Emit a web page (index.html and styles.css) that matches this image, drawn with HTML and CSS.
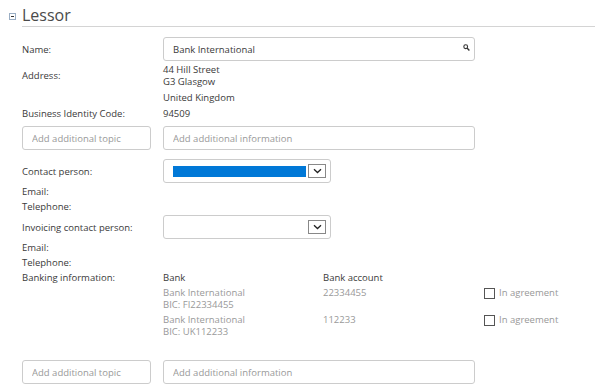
FILE: index.html
```html
<!DOCTYPE html>
<html lang="en">
<head>
    <meta charset="UTF-8">
    <title>Lessor</title>
    <link rel="stylesheet" href="styles.css">
</head>
<body>
    <div class="section">
        <div class="section-head">
            <svg class="toggle" width="7" height="7" viewBox="0 0 7 7">
                <rect x="0.5" y="0.5" width="6" height="6" fill="#fff" stroke="#9aaec4"/>
                <line x1="2" y1="3.5" x2="5" y2="3.5" stroke="#333"/>
            </svg>
            <h2>Lessor</h2>
        </div>

        <div class="row row-input">
            <label class="label" for="lessorName">Name:</label>
            <div class="search-field">
                <input type="text" id="lessorName" class="field wide" value="Bank International">
                <svg class="search-icon" width="7" height="7" viewBox="0 0 7 7">
                    <circle cx="2.7" cy="2.7" r="1.9" fill="none" stroke="#333" stroke-width="1.1"/>
                    <line x1="4" y1="4" x2="6.4" y2="6.4" stroke="#333" stroke-width="1.4"/>
                </svg>
            </div>
        </div>

        <div class="row address">
            <div class="label">Address:</div>
            <div class="value">44 Hill Street<br>G3 Glasgow</div>
        </div>
        <div class="row line16 country">
            <div class="label"></div>
            <div class="value">United Kingdom</div>
        </div>
        <div class="row line16">
            <div class="label">Business Identity Code:</div>
            <div class="value">94509</div>
        </div>

        <div class="row row-input extra">
            <input type="text" class="field topic" placeholder="Add additional topic">
            <input type="text" class="field wide" placeholder="Add additional information">
        </div>

        <div class="row row-input contact">
            <div class="label">Contact person:</div>
            <div class="select">
                <span class="selected"></span>
                <span class="arrow">
                    <svg width="9" height="6" viewBox="0 0 9 6"><path d="M1 1.2 L4.5 4.5 L8 1.2" fill="none" stroke="#222" stroke-width="1.3"/></svg>
                </span>
            </div>
        </div>
        <div class="row line15 first"><div class="label">Email:</div></div>
        <div class="row line15"><div class="label">Telephone:</div></div>

        <div class="row row-input invoicing">
            <div class="label">Invoicing contact person:</div>
            <div class="select">
                <span class="empty"></span>
                <span class="arrow">
                    <svg width="9" height="6" viewBox="0 0 9 6"><path d="M1 1.2 L4.5 4.5 L8 1.2" fill="none" stroke="#222" stroke-width="1.3"/></svg>
                </span>
            </div>
        </div>
        <div class="row line15 first"><div class="label">Email:</div></div>
        <div class="row line15"><div class="label">Telephone:</div></div>

        <div class="row line15">
            <div class="label">Banking information:</div>
            <div class="bank-col">Bank</div>
            <div class="acc-col">Bank account</div>
        </div>

        <div class="bank-list">
            <div class="bank-row">
                <div class="bank-col">Bank International<br>BIC: FI22334455</div>
                <div class="acc-col">22334455</div>
                <label class="agree"><span class="check"></span>In agreement</label>
            </div>
            <div class="bank-row">
                <div class="bank-col">Bank International<br>BIC: UK112233</div>
                <div class="acc-col">112233</div>
                <label class="agree"><span class="check"></span>In agreement</label>
            </div>
        </div>

        <div class="row row-input extra bottom">
            <input type="text" class="field topic" placeholder="Add additional topic">
            <input type="text" class="field wide" placeholder="Add additional information">
        </div>
    </div>
</body>
</html>
```

FILE: styles.css
```css
body {
    margin: 0;
    background: #ffffff;
    font-family: 'Open Sans', 'Liberation Sans', sans-serif;
    font-size: 9.5px;
    color: #3a3a3a;
}

.section {
    padding: 5px 19px 0 9px;
}

.section-head {
    display: flex;
    align-items: center;
    gap: 6px;
}

.toggle {
    flex: none;
    margin-top: 1px;
}

.section-head h2 {
    flex: 1;
    margin: 0;
    font-size: 16px;
    font-weight: 400;
    line-height: 21px;
    color: #4a4a4a;
    border-bottom: 1px solid #d4d4d4;
}

.row {
    display: flex;
    align-items: center;
    padding-left: 13px;
}

.label {
    width: 141px;
    flex: none;
}

.row-input {
    height: 24px;
    margin-top: 10px;
}

.address {
    margin-top: 3px;
    line-height: 12px;
}

.country {
    margin-top: 1px;
}

.line16 {
    height: 16px;
}

.line15 {
    height: 15px;
}

.line15.first {
    margin-top: 1px;
}

.extra {
    margin-top: 5px;
    gap: 12px;
}

.contact {
    margin-top: 9px;
}

.invoicing {
    margin-top: 1px;
}

.field {
    box-sizing: border-box;
    height: 24px;
    border: 1px solid #cccccc;
    border-radius: 3px;
    padding: 0 9px;
    font-family: inherit;
    font-size: 9.5px;
    color: #3a3a3a;
    background: #ffffff;
    outline: none;
}

.field::placeholder {
    color: #999999;
}

.topic {
    width: 129px;
}

.wide {
    width: 312px;
}

.search-field {
    position: relative;
    display: flex;
}

.search-icon {
    position: absolute;
    right: 5px;
    top: 7px;
}

.select {
    box-sizing: border-box;
    width: 168px;
    height: 24px;
    border: 1px solid #cccccc;
    border-radius: 3px;
    display: flex;
    align-items: center;
    padding: 0 4px 0 9px;
    gap: 2px;
}

.selected {
    width: 133px;
    height: 11px;
    background: #0078d7;
}

.empty {
    width: 133px;
}

.arrow {
    box-sizing: border-box;
    width: 18px;
    height: 14px;
    border: 1px solid #888888;
    display: flex;
    align-items: center;
    justify-content: center;
    background: #ffffff;
}

.bank-col {
    width: 160px;
    flex: none;
}

.acc-col {
    width: 161px;
    flex: none;
}

.bank-list {
    padding-left: 154px;
    color: #999999;
    line-height: 12px;
    margin-top: 2px;
}

.bank-row {
    display: flex;
    align-items: flex-start;
    margin-bottom: 3px;
}

.agree {
    display: flex;
    align-items: center;
    gap: 4px;
}

.check {
    box-sizing: border-box;
    width: 11px;
    height: 11px;
    border: 1px solid #555555;
}

.bottom {
    margin-top: 22px;
}
```
